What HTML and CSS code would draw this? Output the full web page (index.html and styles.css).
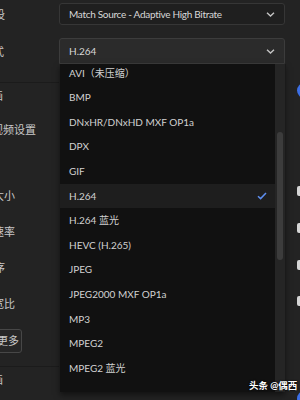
FILE: index.html
```html
<!DOCTYPE html>
<html>
	<head>
		<meta charset="utf-8">
		<title>导出设置</title>
		<link rel="stylesheet" href="styles.css">
	</head>
	<body>
		<div class="win">
			<div class="side">
				<div class="lab preset">预设</div>
				<div class="lab format">格式</div>
				<div class="rule rule-a"></div>
				<div class="lab head">画</div>
				<div class="lab video-set">视频设置</div>
				<div class="lab frame-size">帧大小</div>
				<div class="lab rate">帧速率</div>
				<div class="lab field">场序</div>
				<div class="lab aspect">长宽比</div>
				<div class="more">更多</div>
				<div class="rule rule-b"></div>
				<div class="lab head">画</div>
			</div>
			<div class="main">
				<div class="select">
					<span class="tight">Match Source - Adaptive High Bitrate</span>
					<svg width="9" height="5" viewBox="0 0 9 5"><path d="M1 0.8 4.5 4 8 0.8" fill="none" stroke="#c4c4c4" stroke-width="1.4"/></svg>
				</div>
				<div class="select open">
					<span>H.264</span>
					<svg width="9" height="5" viewBox="0 0 9 5"><path d="M1 0.8 4.5 4 8 0.8" fill="none" stroke="#c4c4c4" stroke-width="1.4"/></svg>
				</div>
			</div>
			<div class="edge">
				<div class="dot"></div>
				<div class="toggle"></div>
				<div class="chk chk-a"></div>
				<div class="chk"></div>
				<div class="chk"></div>
				<div class="chk chk-d"></div>
				<div class="toggle toggle-b"></div>
			</div>

			<!-- 格式下拉列表 -->
			<div class="popup">
				<div class="list">
					<ul>
						<li>AVI（未压缩）</li>
						<li>BMP</li>
						<li>DNxHR/DNxHD MXF OP1a</li>
						<li>DPX</li>
						<li>GIF</li>
						<li class="current">H.264
							<svg width="10" height="8" viewBox="0 0 10 8"><path d="M1 4.2 3.6 6.6 9 1" fill="none" stroke="#5d8ef0" stroke-width="1.5"/></svg>
						</li>
						<li>H.264 蓝光</li>
						<li>HEVC (H.265)</li>
						<li>JPEG</li>
						<li>JPEG2000 MXF OP1a</li>
						<li>MP3</li>
						<li>MPEG2</li>
						<li>MPEG2 蓝光</li>
					</ul>
				</div>
				<div class="track"><div class="thumb"></div></div>
			</div>
			<div class="mark">头条 @偶西</div>
		</div>
	</body>
</html>
```

FILE: styles.css
```css
*{
	padding: 0;
	margin: 0;
	list-style: none;
	box-sizing: border-box;
}
body{
	background: #232323;
	font-family: "Lato", "Noto Sans CJK SC", sans-serif;
	overflow: hidden;
}
.win{
	width: 300px;
	height: 400px;
	position: relative;
	display: flex;
	overflow: hidden;
}
.side{
	width: 59px;
	flex: none;
	display: flex;
	flex-direction: column;
	padding-top: 3px;
}
.lab{
	height: 24px;
	line-height: 24px;
	font-size: 11px;
	color: #c8c8c8;
	white-space: nowrap;
}
.preset{ text-indent: -17px; }
.format{ text-indent: -18px; margin-top: 13px; }
.head{ text-indent: -8px; height: 26px; line-height: 26px; }
.video-set{ text-indent: -8px; margin-top: 9px; }
.frame-size{ text-indent: -18px; margin-top: 42px; }
.rate{ text-indent: -18px; margin-top: 12px; }
.field{ text-indent: -17px; margin-top: 12px; }
.aspect{ text-indent: -18px; margin-top: 12px; }
.rule{
	height: 1px;
	background: #1b1b1b;
}
.rule-a{ margin-top: 18px; }
.rule-b{ margin-top: 13px; }
.more{
	align-self: flex-start;
	margin-top: 13px;
	margin-left: -17px;
	height: 24px;
	line-height: 22px;
	padding: 0 2px 0 13px;
	border: 1px solid #474747;
	border-radius: 3px;
	background: #262626;
	font-size: 11px;
	color: #c8c8c8;
	white-space: nowrap;
}
.main{
	flex: 1;
	padding-top: 3px;
}
.select{
	height: 22px;
	display: flex;
	align-items: center;
	justify-content: space-between;
	padding: 0 9px;
	border: 1px solid #363636;
	border-radius: 3px;
	background: #1f1f1f;
	font-size: 10px;
	color: #d8d8d8;
	white-space: nowrap;
}
.select .tight{
	letter-spacing: -0.3px;
}
.select.open{
	height: 26px;
	margin-top: 13px;
	background: #2b2b2b;
	border-color: #3c3c3c;
	border-radius: 3px 3px 0 0;
}
.edge{
	width: 15px;
	flex: none;
	display: flex;
	flex-direction: column;
	padding-left: 12px;
}
.dot{
	width: 2px;
	height: 2px;
	margin-top: 12px;
	background: #bdbdbd;
}
.toggle{
	width: 20px;
	height: 15px;
	margin-top: 71px;
	border-radius: 8px;
	background: #3c6fe6;
	flex: none;
}
.toggle-b{ margin-top: 85px; }
.chk{
	width: 10px;
	height: 10px;
	margin-top: 27px;
	border-radius: 2px;
	background: #d6d6d6;
	flex: none;
}
.chk-a{ margin-top: 88px; }
.chk-d{ margin-top: 26px; }
.popup{
	position: absolute;
	left: 60px;
	top: 64px;
	width: 225px;
	height: 328px;
	display: flex;
	background: #111;
	padding-bottom: 8px;
	box-shadow: 1px 0 0 #1a1a1a, 0 3px 6px rgba(0,0,0,0.5);
}
.list{
	flex: 1;
	overflow: hidden;
}
.list ul{
	margin-top: -3.3px;
}
.list li{
	height: 24.6px;
	line-height: 24.6px;
	padding: 0 8px 0 9px;
	font-size: 10px;
	color: #d2d2d2;
	white-space: nowrap;
}
.list li.current{
	display: flex;
	align-items: center;
	justify-content: space-between;
	background: #1e1e1e;
}
.track{
	width: 10px;
	flex: none;
	padding: 0 2px;
	background: #252525;
	margin-bottom: -8px;
}
.thumb{
	width: 6px;
	height: 128px;
	margin-top: 68px;
	border-radius: 3px;
	background: #3c3c3c;
}
.mark{
	position: absolute;
	left: 249px;
	top: 378px;
	font-size: 9.5px;
	font-weight: bold;
	color: #fff;
	white-space: nowrap;
	text-shadow: 0 0 2px #000, 0 0 1px #000;
}
```
